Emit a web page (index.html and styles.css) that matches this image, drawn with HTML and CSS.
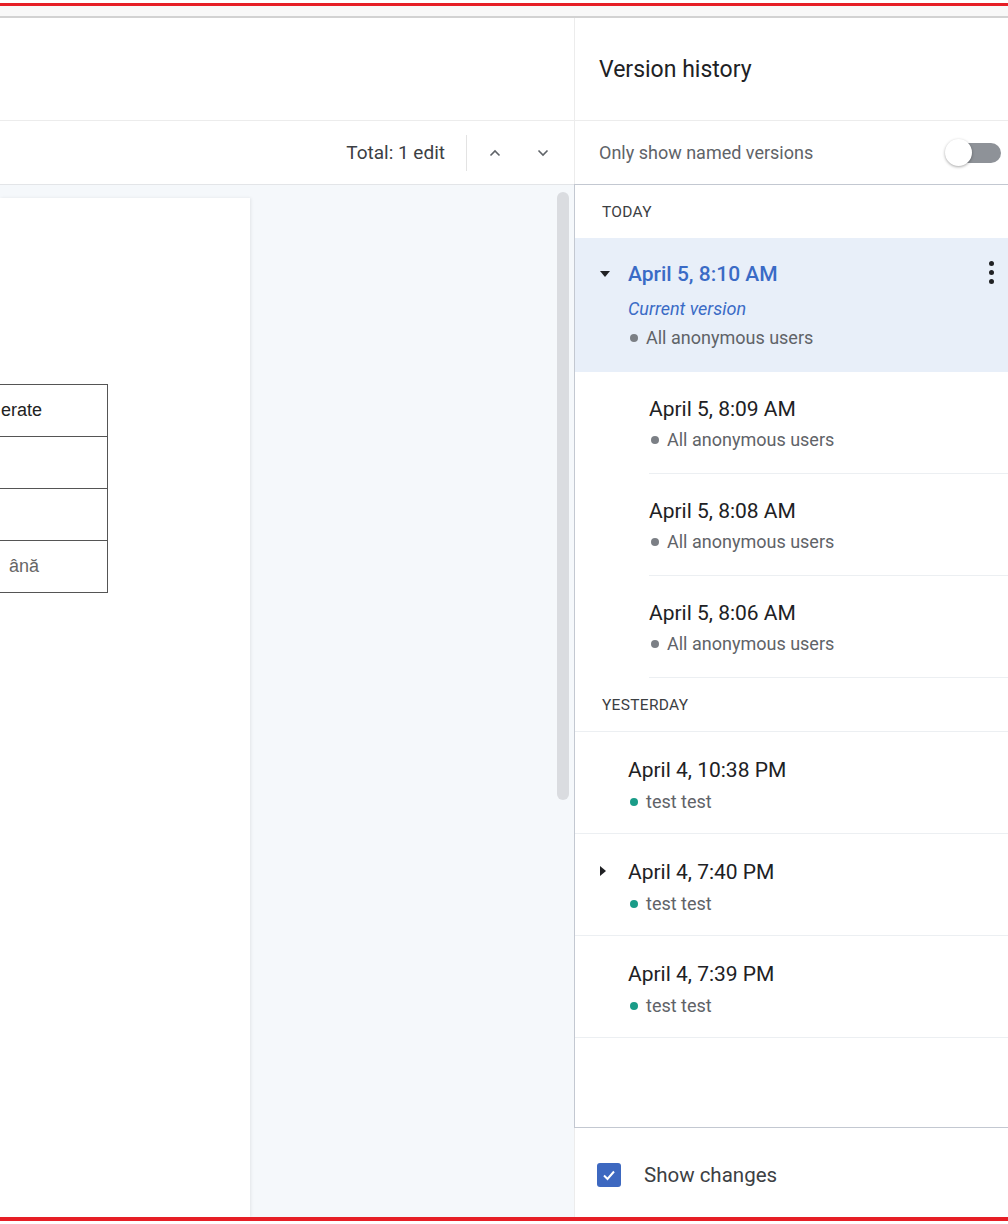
FILE: index.html
```html
<!DOCTYPE html>
<html lang="en">
<head>
<meta charset="utf-8">
<title>Version history</title>
<link rel="stylesheet" href="styles.css">
</head>
<body>
<div class="app">
  <div class="redline"></div>
  <div class="chrome"></div>
  <div class="main">
    <section class="editor">
      <div class="ed-header"></div>
      <div class="ed-toolbar">
        <span class="total">Total: 1 edit</span>
        <span class="vdiv"></span>
        <span class="nav" aria-label="Previous edit">
          <svg width="12" height="8" viewBox="0 0 12 8"><polyline points="1.5,6.5 6,2 10.5,6.5" fill="none" stroke="#5f6368" stroke-width="1.6"/></svg>
        </span>
        <span class="nav" aria-label="Next edit">
          <svg width="12" height="8" viewBox="0 0 12 8"><polyline points="1.5,1.5 6,6 10.5,1.5" fill="none" stroke="#5f6368" stroke-width="1.6"/></svg>
        </span>
      </div>
      <div class="ed-canvas">
        <div class="page">
          <table class="doc-table">
            <tr><td>erate</td></tr>
            <tr><td></td></tr>
            <tr><td></td></tr>
            <tr><td class="muted">ână</td></tr>
          </table>
        </div>
        <div class="scrollbar"></div>
      </div>
    </section>

    <aside class="history">
      <div class="h-header">Version history</div>
      <div class="h-toolbar">
        <span class="named">Only show named versions</span>
        <span class="toggle"><span class="track"></span><span class="knob"></span></span>
      </div>
      <div class="h-list">
        <div class="group">Today</div>

        <div class="ver selected">
          <span class="caret-down"></span>
          <div class="ver-body">
            <div class="ver-date">April 5, 8:10 AM</div>
            <div class="ver-current">Current version</div>
            <div class="ver-user"><span class="dot gray"></span>All anonymous users</div>
          </div>
          <span class="kebab"><i></i><i></i><i></i></span>
        </div>

        <div class="sub">
          <div class="sub-inner">
            <div class="ver-date">April 5, 8:09 AM</div>
            <div class="ver-user"><span class="dot gray"></span>All anonymous users</div>
          </div>
        </div>
        <div class="sub">
          <div class="sub-inner">
            <div class="ver-date">April 5, 8:08 AM</div>
            <div class="ver-user"><span class="dot gray"></span>All anonymous users</div>
          </div>
        </div>
        <div class="sub">
          <div class="sub-inner">
            <div class="ver-date">April 5, 8:06 AM</div>
            <div class="ver-user"><span class="dot gray"></span>All anonymous users</div>
          </div>
        </div>

        <div class="group bordered">Yesterday</div>

        <div class="ver plain">
          <div class="ver-body">
            <div class="ver-date">April 4, 10:38 PM</div>
            <div class="ver-user"><span class="dot teal"></span>test test</div>
          </div>
        </div>
        <div class="ver plain has-caret">
          <span class="caret-right"></span>
          <div class="ver-body">
            <div class="ver-date">April 4, 7:40 PM</div>
            <div class="ver-user"><span class="dot teal"></span>test test</div>
          </div>
        </div>
        <div class="ver plain">
          <div class="ver-body">
            <div class="ver-date">April 4, 7:39 PM</div>
            <div class="ver-user"><span class="dot teal"></span>test test</div>
          </div>
        </div>
      </div>
      <div class="h-footer">
        <span class="checkbox">
          <svg width="16" height="16" viewBox="0 0 16 16"><polyline points="3,8.5 6.5,12 13,4.5" fill="none" stroke="#fff" stroke-width="2"/></svg>
        </span>
        <span class="show">Show changes</span>
      </div>
    </aside>
  </div>
  <div class="redline bottom"></div>
</div>
</body>
</html>
```

FILE: styles.css
```css
* { box-sizing: border-box; }
html, body {
  margin: 0;
  padding: 0;
  background: #fff;
  overflow: hidden;
}
body {
  font-family: Roboto, "Noto Sans", Arial, sans-serif;
  color: #202124;
}
.app {
  width: 1008px;
  height: 1224px;
  padding-top: 3px;
  display: flex;
  flex-direction: column;
}
.redline {
  height: 3px;
  background: #e61e25;
  flex: none;
}
.redline.bottom {
  height: 4px;
  margin-bottom: 3px;
}
.chrome {
  height: 12px;
  background: #f8f8f8;
  border-bottom: 2px solid #d2d2d2;
  flex: none;
}
.main {
  flex: 1;
  display: flex;
  min-height: 0;
}

/* ---------- editor ---------- */
.editor {
  width: 574px;
  flex: none;
  display: flex;
  flex-direction: column;
}
.ed-header {
  height: 103px;
  border-bottom: 1px solid #ececec;
  flex: none;
}
.ed-toolbar {
  height: 64px;
  border-bottom: 1px solid #e3e5e8;
  display: flex;
  align-items: center;
  justify-content: flex-end;
  padding-right: 19px;
  flex: none;
}
.total {
  font-size: 19px;
  color: #3c4043;
  margin-right: 21px;
}
.vdiv {
  width: 1px;
  height: 36px;
  background: #e3e3e3;
  margin-right: 16px;
}
.nav {
  width: 24px;
  height: 24px;
  display: flex;
  align-items: center;
  justify-content: center;
}
.nav + .nav { margin-left: 24px; }

.ed-canvas {
  flex: 1;
  background: #f5f8fb;
  display: flex;
  justify-content: space-between;
  align-items: flex-start;
}
.page {
  width: 250px;
  align-self: stretch;
  margin-top: 13px;
  background: #fff;
  box-shadow: 1px 0 3px rgba(0, 0, 0, 0.08);
  padding-top: 186px;
}
.doc-table {
  border-collapse: collapse;
  margin-left: -2px;
  width: 110px;
  font-family: "Liberation Sans", Arial, sans-serif;
  font-size: 18px;
}
.doc-table td {
  border: 1px solid #555;
  height: 52px;
  padding: 0 0 0 2px;
  color: #222;
}
.doc-table td.muted {
  color: #666;
  padding-left: 10px;
}
.scrollbar {
  width: 12px;
  height: 608px;
  margin-top: 7px;
  margin-right: 5px;
  background: #dadce0;
  border-radius: 6px;
}

/* ---------- history panel ---------- */
.history {
  flex: 1;
  display: flex;
  flex-direction: column;
  min-width: 0;
}
.h-header {
  height: 103px;
  border-left: 1px solid #ececec;
  border-bottom: 1px solid #ececec;
  padding-left: 24px;
  display: flex;
  align-items: center;
  font-size: 23px;
  color: #202124;
  flex: none;
}
.h-toolbar {
  height: 63px;
  border-left: 1px solid #ececec;
  padding-left: 24px;
  padding-right: 7px;
  display: flex;
  align-items: center;
  justify-content: space-between;
  flex: none;
}
.named {
  font-size: 18px;
  color: #5f6368;
}
.toggle {
  position: relative;
  width: 56px;
  height: 28px;
}
.toggle .track {
  position: absolute;
  left: 10px;
  top: 4px;
  width: 46px;
  height: 20px;
  border-radius: 10px;
  background: #8e9298;
}
.toggle .knob {
  position: absolute;
  left: 0;
  top: 0;
  width: 27px;
  height: 27px;
  border-radius: 50%;
  background: #fff;
  box-shadow: 0 1px 3px rgba(0, 0, 0, 0.35);
}

.h-list {
  flex: 1;
  border-top: 1px solid #c3c8d1;
  border-left: 1px solid #c3c8d1;
  border-bottom: 1px solid #c3c8d1;
  min-height: 0;
}
.group {
  height: 53px;
  padding-left: 27px;
  display: flex;
  align-items: center;
  font-size: 15.5px;
  text-transform: uppercase;
  color: #3c4043;
  letter-spacing: 0.3px;
}
.group.bordered {
  height: 54px;
  border-bottom: 1px solid #eceff2;
}

.ver-date {
  font-size: 21px;
  line-height: 28px;
  color: #202124;
}
.ver-user {
  font-size: 18px;
  line-height: 24px;
  color: #5f6368;
  display: flex;
  align-items: center;
}
.dot {
  width: 8px;
  height: 8px;
  border-radius: 50%;
  margin-left: 2px;
  margin-right: 8px;
  flex: none;
}
.dot.gray { background: #7b7f85; }
.dot.teal { background: #1a9c88; }

.ver {
  display: flex;
  align-items: flex-start;
}
.ver.selected {
  background: #e8eff9;
  height: 134px;
  padding: 22px 14px 0 25px;
}
.selected .ver-date {
  color: #3a6bc6;
  font-weight: 500;
}
.ver-current {
  font-size: 18px;
  line-height: 24px;
  margin-top: 9px;
  color: #3a6bc6;
  font-style: italic;
}
.selected .ver-user { margin-top: 5px; }
.caret-down {
  width: 0;
  height: 0;
  border-left: 5.5px solid transparent;
  border-right: 5.5px solid transparent;
  border-top: 6px solid #202124;
  margin-top: 11px;
  margin-right: 18px;
  flex: none;
}
.kebab {
  margin-left: auto;
  display: flex;
  flex-direction: column;
  gap: 4px;
  padding-top: 1px;
}
.kebab i {
  width: 5px;
  height: 5px;
  border-radius: 50%;
  background: #202124;
  display: block;
}

.sub {
  padding-left: 74px;
}
.sub-inner {
  height: 102px;
  padding-top: 23px;
  border-bottom: 1px solid #eceff2;
}
.sub-inner .ver-user { margin-top: 5px; }

.ver.plain {
  height: 102px;
  padding: 24px 0 0 53px;
  border-bottom: 1px solid #eceff2;
}
.ver.plain .ver-user { margin-top: 6px; }
.ver.plain.has-caret { padding-left: 25px; }
.caret-right {
  width: 0;
  height: 0;
  border-top: 5.5px solid transparent;
  border-bottom: 5.5px solid transparent;
  border-left: 6px solid #202124;
  margin-top: 8px;
  margin-right: 22px;
  flex: none;
}

.h-footer {
  height: 89px;
  border-left: 1px solid #ececec;
  padding: 5px 0 0 22px;
  display: flex;
  align-items: center;
  flex: none;
}
.checkbox {
  width: 24px;
  height: 24px;
  border-radius: 3px;
  background: #3d68c0;
  display: flex;
  align-items: center;
  justify-content: center;
  margin-right: 23px;
}
.show {
  font-size: 20.5px;
  color: #3c4043;
}
```
